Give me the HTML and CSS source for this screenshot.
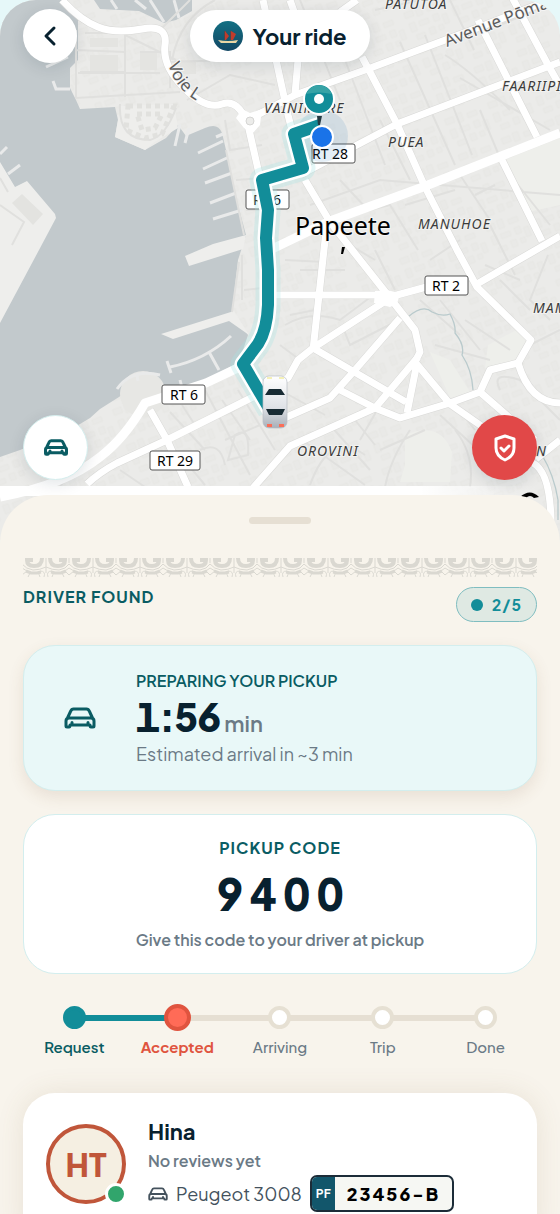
FILE: index.html
```html
<!DOCTYPE html>
<html lang="en">
<head>
    <meta charset="UTF-8">
    <meta name="viewport" content="width=device-width, initial-scale=1.0">
    <title>Your ride</title>
    <link rel="stylesheet" href="styles.css">
</head>
<body>
    <svg class="symbols" aria-hidden="true">
        <symbol id="carIcon" viewBox="0 0 32 22">
            <path d="M3.5 11 6.5 4.5Q7.5 2 9.5 2H22.5Q24.5 2 25.5 4.5L28.5 11M5 11H27Q30 11 30 14V19Q30 20 29 20H27Q26 20 26 18H6Q6 20 5 20H3Q2 20 2 19V14Q2 11 5 11ZM8 15.5V17M24 15.5V17" fill="none" stroke="currentColor" stroke-linecap="round" stroke-linejoin="round"/>
        </symbol>
    </svg>

    <div class="app">
        <header class="map">
            <svg class="map-canvas" viewBox="0 0 560 540" preserveAspectRatio="xMidYMin slice" role="img" aria-label="Map of Papeete">
                <defs>
                    <pattern id="blocks" width="46" height="38" patternUnits="userSpaceOnUse" patternTransform="rotate(-21)">
                        <path d="M4 5h9v6h-9zM16 4h6v9h-6zM27 7h10v5h-10zM5 17h6v9h-6zM15 18h10v5h-10zM30 17h6v7h-6zM39 20h5v10h-5zM8 30h9v5h-9zM22 28h6v7h-6zM32 29h5v5h-5z" fill="#e9e9e7" stroke="#e5e5e2" stroke-width=".7"/>
                    </pattern>
                    <linearGradient id="carBody" x1="0" y1="0" x2="0" y2="1">
                        <stop offset="0" stop-color="#fff"/>
                        <stop offset=".6" stop-color="#dfe2e7"/>
                        <stop offset="1" stop-color="#a9afb8"/>
                    </linearGradient>
                    <linearGradient id="fade">
                        <stop offset=".75" stop-color="#fff"/>
                        <stop offset=".96" stop-color="#fff" stop-opacity="0"/>
                    </linearGradient>
                </defs>
                <rect width="560" height="540" fill="#ebebe9"/>
                <rect width="560" height="540" fill="url(#blocks)"/>

                <!-- parks -->
                <g fill="#eeefeb">
                    <path d="M505 160 560 138V205L528 212ZM405 435Q440 420 452 452L450 482H400L405 465ZM488 345 520 328 535 343 514 362 485 368ZM430 352 450 360 470 392 450 398Z"/>
                </g>

                <!-- harbour -->
                <g fill="#c2c9cc">
                    <path d="M0 0H62L78 20V60L70 68 70 88 76 100 80 109 115 107 118 120 115 137 145 150 166 138 178 125 186 136 205 128Q218 122 222 133L226 150 234 190 246 235 238 260 232 312 248 335 239 362 206 380 166 394Q152 374 135 385L119 397 100 409 90 418 70 430 20 450 0 457Z"/>
                    <path d="M94 0 100 9 139 11 164 23 176 20 192 11V0Z"/>
                </g>
                <g fill="#eeeeec">
                    <path d="M0 162 15 187 27 181 55 214 56 218 39 250 0 323Z"/>
                    <path d="M213 244 246 235 243 249 189 266 185 256ZM161 334 234 311 249 335 229 321 173 339Z"/>
                    <path d="M118 120 115 137 145 150 153 143 178 128 174 104 120 106Z"/>
                </g>
                <path d="M128 106H174L162 134 145 138 126 130Z" fill="none" stroke="#e1e1de" stroke-width="5" stroke-dasharray="5 4"/>
                <path d="M137 114H162L155 128 142 130Z" fill="none" stroke="#e1e1de" stroke-width="5" stroke-dasharray="5 4"/>
                <circle cx="143" cy="394" r="23" fill="#e7e7e4"/>
                <path d="M12 203 22 194 43 214 33 225Z" fill="#e3e3e0"/>
                <path d="M90 38H118V47H90ZM90 55H118V72H90ZM140 52H157V70H140ZM180 60H196V74H180Z" fill="#e4e4e1"/>
                <path d="M0 205 24 222 12 245M0 178 8 192M232 312 239 262" class="lane"/>
                <g class="pier">
                    <path d="M8 174 20 165M0 154 7 147M53 81 56 89 70 89M46 67 68 57M198 153 223 141M203 169 229 157M205 183 232 173M210 203 236 193M213 219 242 210M216 137 223 134M180 124 175 146M189 128 185 143"/>
                    <path d="M167 361 171 373M170 367Q205 360 231 336M209 352 219 370M117 389Q132 368 160 375M137 375 138 381M180 380 182 388" />
                    <path d="M135 0 146 9M150 0 164 22M174 0 179 18M111 0 117 9"/>
                </g>

                <!-- minor streets -->
                <g class="lane">
                    <path d="M76 30V98L180 92M76 50 125 52M125 30V97M85 33H125V72H80M125 35 176 60M78 73H160M140 52H170V88M160 30 190 0M120 104Q118 140 150 140 166 136 176 108M172 60Q180 18 215 0M170 62 230 60M187 100 230 75 275 85M225 120 230 150 262 145M226 150 244 235M236 180 262 178M242 255V300M244 290 262 288M246 210H262"/>
                    <path d="M300 0 340 100M345 60 385 165M400 42 455 165M425 35 472 155M445 55Q470 70 510 110M460 78 550 130M500 25 560 0M375 10 420 0M450 0 474 50M310 205 380 180 560 195M340 180 368 210M380 120 410 180M480 110 505 170M460 175 490 220M405 205 455 190M350 215 390 205 418 250M490 225 515 275M510 175 550 225M475 195 495 185"/>
                    <path d="M285 325Q310 310 340 320L380 290M280 345 300 360M290 315 315 310M342 325 350 345 395 322M330 355 355 375M345 270 300 270M285 260 325 262M350 245 375 260M395 290 375 250M420 300 460 335M440 300 480 350M430 260 460 240M485 265 520 280M500 280 530 310M548 255 530 300 550 320M530 345 560 330M435 345 490 360M465 320 510 350M500 390Q490 370 520 380L560 420M455 405 475 430M380 405 360 440M330 425 370 470M302 440 365 485M365 455Q330 430 310 485M380 450 425 430M410 430Q390 460 385 487M455 430Q475 455 470 487M355 420 375 445M440 415 500 470M280 390 325 415"/>
                    <path d="M170 412 205 450M182 405 195 425M205 390 250 475M222 400 250 440M238 390 275 450M200 425 235 410M225 440 260 425M200 450Q220 440 225 465M235 435Q250 425 248 455L228 460ZM180 455 205 485M120 470 145 487M60 487 80 455"/>
                </g>
                <path d="M408 317Q423 304 432 312 442 317 450 314 456 325 455 333 465 345 462 355 472 370 473 390M542 455Q554 475 558 500V520" fill="none" stroke="#b9cacc" stroke-width="1.3"/>

                <g class="road-edge">
                    <path d="M62 0Q80 20 98 27T142 29 165 45 184 88 222 104 248 125L260 178"/>
                    <path d="M248 120 295 95 365 70 480 27 560-4M300 175 397 124 560 62M362 57 370 72 397 124 425 187 457 250 477 287 531 340 518 363 490 370 480 392 450 403 400 418 375 408 338 389M505-16 547 63 565 95M478 20 537 137M502 160 542 241M477 284 560 236M305 180 330 222 387 294 415 330 420 352 415 362 450 404 480 425 533 463Q550 472 551 520"/>
                    <path d="M400 318 355 370 330 398 280 420M418 357 375 408 290 446 253 488M417 363 407 413M386 298 430 286M268 295H387M327 222 313 350M387 300 313 348 298 360 288 378 268 388M313 348 406 402M480 392 535 440M518 363Q530 403 560 403M263 0 288 115 302 170M298 60 295 94M290 0 297 20M340 12 357 0M560 440 536 459"/>
                    <path d="M87 484Q100 472 117 463L167 440 265 391M150 410 167 440 188 487"/>
                </g>
                <g class="road">
                    <path d="M62 0Q80 20 98 27T142 29 165 45 184 88 222 104 248 125L260 178"/>
                    <path d="M248 120 295 95 365 70 480 27 560-4M300 175 397 124 560 62M362 57 370 72 397 124 425 187 457 250 477 287 531 340 518 363 490 370 480 392 450 403 400 418 375 408 338 389M505-16 547 63 565 95M478 20 537 137M502 160 542 241M477 284 560 236M305 180 330 222 387 294 415 330 420 352 415 362 450 404 480 425 533 463Q550 472 551 520"/>
                    <path d="M400 318 355 370 330 398 280 420M418 357 375 408 290 446 253 488M417 363 407 413M386 298 430 286M268 295H387M327 222 313 350M387 300 313 348 298 360 288 378 268 388M313 348 406 402M480 392 535 440M518 363Q530 403 560 403M263 0 288 115 302 170M298 60 295 94M290 0 297 20M340 12 357 0M560 440 536 459"/>
                    <path d="M87 484Q100 472 117 463L167 440 265 391M150 410 167 440 188 487"/>
                    <path d="M270 250 330 221 423 187 560 133M0 497Q65 485 100 457 125 438 145 403L206 383 242 366" class="wide"/>
                </g>
                <path d="M375 291 386 290 400 293 397 304 390 307 374 303Z" fill="#fff"/>
                <path d="M242 109 250 113 262 109 260 125 252 134 244 128 236 118Z" fill="#fff"/>
                <circle cx="250" cy="121" r="4" fill="#ececea" stroke="#d5d5d3"/>

                <!-- labels -->
                <g class="area">
                    <text x="385" y="9">PATUTOA</text>
                    <text x="264" y="113">VAINIMORE</text>
                    <text x="502" y="91">FAARIIPITI</text>
                    <text x="388" y="147">PUEA</text>
                    <text x="418" y="229">MANUHOE</text>
                    <text x="533" y="313">MAMAO</text>
                    <text x="297" y="456">OROVINI</text>
                    <text x="536" y="456">N</text>
                </g>
                <path id="voieLabel" d="M168 64Q177 97 214 108" fill="none"/>
                <text class="street"><textPath href="#voieLabel">Voie L</textPath></text>
                <text class="street" transform="translate(447 47) rotate(-21)">Avenue Pōma</text>
                <text class="city" x="295" y="235">Papeete</text>
                <path d="M342 247h3l-2 7h-2z"/>
                <g class="shield">
                    <rect x="312" y="144" width="43" height="19" rx="2"/><text x="330" y="159">RT 28</text>
                    <rect x="246" y="190" width="43" height="19" rx="2"/><text x="267" y="205">RT 6</text>
                    <rect x="425" y="276" width="43" height="19" rx="2"/><text x="446" y="291">RT 2</text>
                    <rect x="162" y="385" width="43" height="19" rx="2"/><text x="184" y="400">RT 6</text>
                    <rect x="150" y="451" width="50" height="19" rx="2"/><text x="175" y="466">RT 29</text>
                </g>

                <!-- route, pickup pin and car -->
                <circle cx="322" cy="136" r="26" fill="#2b7ab8" opacity=".13"/>
                <path d="M320 125 294 134 303 168 262 180 268 210 266 238 268 270V305Q267 330 258 344L243 364 270 410" class="route-glow"/>
                <path d="M320 125 294 134 303 168 262 180 268 210 266 238 268 270V305Q267 330 258 344L243 364 270 410" class="route-case"/>
                <path d="M320 125 294 134 303 168 262 180 268 210 266 238 268 270V305Q267 330 258 344L243 364 270 410" class="route"/>
                <path d="M317 116H322L320 125H318Z" fill="#243a42"/>
                <circle cx="319" cy="99" r="15" fill="#128d99" stroke="#fff" stroke-width="2"/>
                <path d="M306 94A14 14 0 0 1 332 94Q319 91 306 94" fill="#37a3a6"/>
                <circle cx="319" cy="99" r="5" fill="#fff"/>
                <circle cx="322" cy="137" r="11" fill="#1a73e8" stroke="#fff" stroke-width="2"/>
                <rect x="263" y="376" width="24" height="52" rx="6" fill="url(#carBody)" stroke="#b8bdc4" stroke-width=".7"/>
                <path d="M269 389H281L285 395H265ZM266 409H285L282 415H269Z" fill="#182b34"/>
                <path d="M267 424h5v3h-5zM279 424h5v3h-5z" fill="#fa6e58"/>
                <path d="M267 377h5v2h-5zM279 377h5v2h-5z" fill="#f5f1b8"/>

                <rect y="486" width="560" height="10" fill="url(#fade)"/>
                <path d="M520 497Q530 488 539 497L534 498Q530 494 526 498Z"/>
            </svg>

            <div class="map-top">
                <button type="button" class="round back" aria-label="Back">
                    <svg width="14" height="22" viewBox="0 0 14 22"><path d="M11 3 3 11 11 19" fill="none" stroke="currentColor" stroke-width="3" stroke-linecap="round" stroke-linejoin="round"/></svg>
                </button>
                <h1 class="title">
                    <svg width="30" height="30" viewBox="0 0 30 30">
                        <defs><linearGradient id="sea" x1="0" y1="0" x2="0" y2="1"><stop offset="0" stop-color="#137083"/><stop offset="1" stop-color="#134764"/></linearGradient></defs>
                        <circle cx="15" cy="15" r="15" fill="url(#sea)"/>
                        <path d="M12 10V19M18 10V19" stroke="#8b3329" stroke-width="1"/>
                        <path d="M12 10 16 15 13 19H12ZM18 10 23 13 20 19H18Z" fill="#c03c2c"/>
                        <path d="M5 19Q15 21 25 19L23 22H8Z" fill="#ead6a5"/>
                    </svg>
                    Your ride
                </h1>
            </div>
            <div class="map-bottom">
                <button type="button" class="round follow" aria-label="Follow car">
                    <svg class="car" width="24" height="17"><use href="#carIcon"/></svg>
                </button>
                <button type="button" class="round safety" aria-label="Safety">
                    <svg width="24" height="28" viewBox="0 0 24 28"><path d="M12 2 21 5V14Q21 22 12 26 3 22 3 14V5ZM8 14 11 17 16 12" fill="none" stroke="currentColor" stroke-width="3" stroke-linecap="round" stroke-linejoin="round"/></svg>
                </button>
            </div>
        </header>

        <main class="sheet">
            <div class="handle"></div>
            <svg class="frieze" aria-hidden="true">
                <defs>
                    <pattern id="tiki" x="23" width="47" height="19" patternUnits="userSpaceOnUse">
                        <g fill="none" stroke="#dad8d1">
                            <path d="M4 0Q4 8 12 8 19 8 19 2H13M43 0Q43 8 35 8 28 8 28 2H34" stroke-width="4"/>
                            <path d="M0 0V15M47 0V15M23 0V5M0 9Q6 12 13 12 20 11 23 6 27 11 34 12 41 12 47 9M2 19Q0 13 6 13M45 19Q47 13 41 13M19 13 23 10 28 13 23 17Z"/>
                            <path d="M5 14 9 15H15L20 13M42 14 38 15H32L27 13" stroke-width="3"/>
                            <path d="M8 14 6 19M39 14 41 19M16 15 18 19M31 15 29 19"/>
                        </g>
                    </pattern>
                </defs>
                <rect width="100%" height="19" fill="url(#tiki)"/>
            </svg>

            <div class="status">
                <h2 class="eyebrow">DRIVER FOUND</h2>
                <span class="badge">2/5</span>
            </div>

            <section class="card eta">
                <svg class="car" width="32" height="22"><use href="#carIcon"/></svg>
                <div>
                    <h3 class="eta-label">PREPARING YOUR PICKUP</h3>
                    <p class="eta-time"><span class="clock">1:56</span><small>min</small></p>
                    <p class="eta-note">Estimated arrival in ~3 min</p>
                </div>
            </section>

            <section class="card code">
                <h3 class="eyebrow">PICKUP CODE</h3>
                <p class="code-value">9400</p>
                <p class="code-note">Give this code to your driver at pickup</p>
            </section>

            <ol class="steps">
                <li class="step done">Request</li>
                <li class="step current">Accepted</li>
                <li class="step">Arriving</li>
                <li class="step">Trip</li>
                <li class="step">Done</li>
            </ol>

            <section class="driver">
                <div class="avatar">HT<span class="online"></span></div>
                <div class="driver-info">
                    <h3 class="driver-name">Hina</h3>
                    <p class="reviews">No reviews yet</p>
                    <div class="vehicle">
                        <svg class="car" width="20" height="14"><use href="#carIcon"/></svg>
                        <span class="model">Peugeot 3008</span>
                        <span class="plate"><span class="country">PF</span><span class="number">23456-B</span></span>
                    </div>
                </div>
            </section>
        </main>
    </div>
</body>
</html>
```
FILE: styles.css
```css
*, *::before {
    box-sizing: border-box;
}
body {
    margin: 0;
    background: #e6f8f9;
    color: #08212f;
    font-family: "Plus Jakarta Sans", Inter, sans-serif;
}
h1, h2, h3, p, ol {
    margin: 0;
    padding: 0;
}
.symbols {
    display: none;
}
.app {
    display: flex;
    flex-direction: column;
    height: 100vh;
}

/* map */
.map {
    position: relative;
    flex: none;
    height: 540px;
    margin-bottom: -45px;
    overflow: hidden;
    border-radius: 36px 36px 0 0;
}
.map-canvas {
    display: block;
    width: 100%;
    height: 100%;
}
.lane {
    fill: none;
    stroke: #e0e0de;
    stroke-width: 2;
}
.pier {
    fill: none;
    stroke: #e9eaea;
    stroke-width: 3;
}
.road, .road-edge {
    fill: none;
    stroke: #fff;
    stroke-width: 7;
    stroke-linejoin: round;
}
.road-edge {
    stroke: #d9d9d7;
    stroke-width: 8;
}
.road .wide {
    stroke-width: 9;
}
.route, .route-case, .route-glow {
    fill: none;
    stroke: #128d99;
    stroke-width: 12;
    stroke-linejoin: round;
}
.route-case {
    stroke: #fff;
    stroke-width: 17;
}
.route-glow {
    stroke: #a5e6e6;
    stroke-width: 25;
    opacity: .3;
}
.area, .street, .city, .shield {
    font-family: "Noto Sans", sans-serif;
}
.area {
    fill: #3c3c3c;
    font-size: 14px;
    font-style: italic;
    letter-spacing: 1px;
    stroke: #f2f2f0;
    stroke-width: 2;
    paint-order: stroke;
}
.street {
    fill: #5c5c5c;
    font-size: 17px;
    stroke: #f5f5f5;
    stroke-width: 2;
    paint-order: stroke;
}
.city {
    font-size: 25px;
    stroke: #f5f5f5;
    stroke-width: 2;
    paint-order: stroke;
}
.shield rect {
    fill: #fff;
    stroke: #555;
}
.shield text {
    font-size: 14px;
    text-anchor: middle;
}
.map-top, .map-bottom {
    position: absolute;
    right: 23px;
    left: 23px;
}
.map-top {
    top: 9px;
    display: grid;
    grid-template-columns: 54px 1fr 54px;
    align-items: center;
}
.map-bottom {
    bottom: 60px;
    display: flex;
    align-items: center;
    justify-content: space-between;
}
.round {
    display: flex;
    align-items: center;
    justify-content: center;
    width: 65px;
    height: 65px;
    padding: 0;
    border: 0;
    border-radius: 50%;
    background: #fff;
    color: #0a5c63;
    cursor: pointer;
    box-shadow: 0 4px 16px rgba(8, 33, 47, 0.12);
}
.back {
    width: 54px;
    height: 54px;
    color: #08212f;
}
.follow {
    border: 1px solid #d5eeee;
}
.safety {
    background: #e14848;
    color: #fff;
}
.car {
    flex: none;
    color: #0a5c63;
    stroke-width: 3;
}
.follow .car {
    stroke-width: 4;
}
.title {
    display: flex;
    align-items: center;
    justify-self: center;
    gap: 9px;
    height: 52px;
    padding: 0 23px;
    border-radius: 26px;
    background: #fff;
    font-size: 22px;
    font-weight: 700;
    box-shadow: 0 4px 16px rgba(8, 33, 47, 0.12);
}

/* sheet */
.sheet {
    position: relative;
    flex: 1;
    min-height: 0;
    padding: 22px 23px 0;
    overflow: hidden auto;
    scrollbar-width: none;
    border-radius: 48px 48px 0 0;
    background: #f8f4ec;
}
.handle {
    width: 62px;
    height: 7px;
    margin: 0 auto 34px;
    border-radius: 4px;
    background: #e6dfd3;
}
.frieze {
    display: block;
    width: 100%;
    height: 19px;
}
.status {
    display: flex;
    align-items: flex-start;
    justify-content: space-between;
    margin: 10px 0 23px;
}
.eyebrow {
    color: #0a5c63;
    font-size: 16px;
    font-weight: 700;
    line-height: 20px;
    letter-spacing: 1px;
}
.badge {
    display: flex;
    align-items: center;
    gap: 9px;
    height: 35px;
    padding: 0 14px;
    border: 1px solid #7fbdc0;
    border-radius: 18px;
    background: #dfe9e3;
    color: #128d99;
    font-size: 16px;
    font-weight: 700;
    font-variant-numeric: tabular-nums;
    letter-spacing: 1px;
}
.badge::before {
    width: 12px;
    height: 12px;
    border-radius: 50%;
    background: #128d99;
    content: "";
}
.card {
    border: 1px solid #d3eeee;
    border-radius: 32px;
    background: #fff;
}
.eta {
    display: flex;
    align-items: center;
    gap: 40px;
    height: 146px;
    margin-bottom: 23px;
    padding: 0 40px;
    background: #e9f8f8;
    box-shadow: 0 6px 16px rgba(120, 80, 50, 0.12);
}
.eta-label {
    color: #0a5c63;
    font-size: 16px;
    font-weight: 600;
    line-height: 24px;
}
.eta-time {
    display: flex;
    align-items: baseline;
    gap: 4px;
    height: 48px;
    font-size: 40px;
    font-weight: 800;
    font-variant-numeric: tabular-nums;
    line-height: 46px;
}
.clock {
    letter-spacing: -1px;
}
.eta-time small {
    color: #6b7a86;
    font-size: 22px;
    font-weight: 600;
    line-height: 28px;
}
.eta-note {
    color: #6b7a86;
    font-size: 18px;
    font-weight: 400;
    line-height: 26px;
}
.code {
    display: flex;
    flex-direction: column;
    align-items: center;
    height: 160px;
    padding-top: 23px;
}
.code-value {
    margin: 8px 0 10px;
    padding-left: 7px;
    font-size: 44px;
    font-weight: 800;
    font-variant-numeric: tabular-nums;
    line-height: 54px;
    letter-spacing: 7px;
}
.code-note {
    color: #6b7a86;
    font-size: 16px;
    font-weight: 600;
    line-height: 20px;
}

/* progress */
.steps {
    display: flex;
    margin: 30px 0 36px;
    list-style: none;
}
.step {
    --before: #e6dfd3;
    --after: #e6dfd3;
    display: flex;
    flex: 1;
    flex-direction: column;
    align-items: center;
    gap: 6px;
    background: linear-gradient(to right, var(--before) 50%, var(--after) 50%) 0 11px / 100% 6px no-repeat;
    color: #6b7a86;
    font-size: 15px;
    font-weight: 500;
    line-height: 20px;
}
.step::before {
    width: 23px;
    height: 23px;
    margin: 2px 0;
    border: 4px solid #e6e0d3;
    border-radius: 50%;
    background: #fff;
    content: "";
}
.step:first-child {
    --before: transparent;
}
.step:last-child {
    --after: transparent;
}
.done {
    --after: #128d99;
    color: #0a5c63;
    font-weight: 600;
}
.done::before {
    border-color: #128d99;
    background: #128d99;
}
.current {
    --before: #128d99;
    color: #e0543f;
    font-weight: 700;
}
.current::before {
    width: 27px;
    height: 27px;
    margin: 0;
    border-color: #e0543f;
    background: #ff6b57;
}

/* driver */
.driver {
    display: flex;
    gap: 22px;
    padding: 24px 23px 40px;
    border-radius: 32px;
    background: #fff;
    box-shadow: 0 0 28px rgba(120, 100, 60, 0.12);
}
.avatar {
    position: relative;
    display: flex;
    flex: none;
    align-items: center;
    justify-content: center;
    width: 80px;
    height: 80px;
    margin-top: 7px;
    border: 4px solid #c0563a;
    border-radius: 50%;
    background: #f5efe2;
    color: #c0563a;
    font-size: 32px;
    font-weight: 800;
    line-height: 68px;
}
.online {
    position: absolute;
    right: -5px;
    bottom: -5px;
    width: 22px;
    height: 22px;
    border: 3px solid #fff;
    border-radius: 50%;
    background: #31a56c;
}
.driver-name {
    font-size: 22px;
    font-weight: 700;
    line-height: 28px;
}
.reviews {
    margin: 6px 0 4px;
    color: #6b7a86;
    font-size: 16px;
    font-weight: 600;
    line-height: 20px;
}
.vehicle {
    display: flex;
    align-items: center;
    gap: 8px;
    color: #44525d;
    white-space: nowrap;
}
.vehicle .car {
    color: #44525d;
}
.model {
    font-size: 18px;
    font-weight: 400;
}
.plate {
    display: flex;
    height: 37px;
    overflow: hidden;
    border: 2px solid #1c2c38;
    border-radius: 7px;
    background: #f6f7f3;
    color: #000;
    line-height: 33px;
}
.country {
    padding: 0 4px;
    background: #12566b;
    color: #fff;
    font-size: 12px;
    font-weight: 700;
}
.number {
    padding: 0 12px;
    font-size: 18px;
    font-weight: 800;
    letter-spacing: 2px;
}
```
